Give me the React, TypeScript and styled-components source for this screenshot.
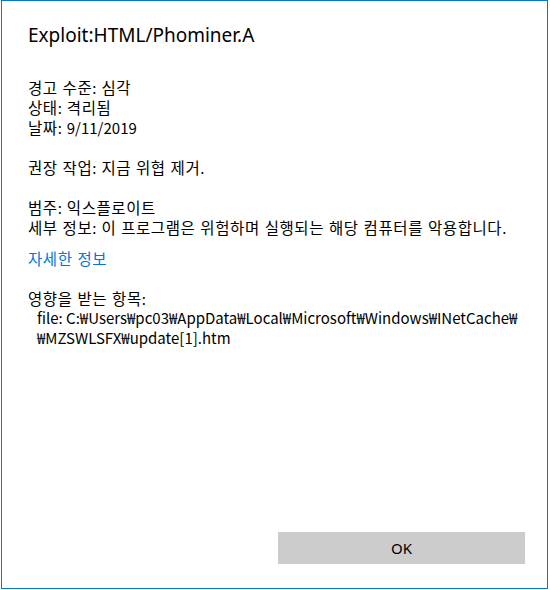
import styled, { createGlobalStyle } from 'styled-components';

const GlobalStyle = createGlobalStyle`
  html, body {
    margin: 0;
    padding: 0;
    background: #ffffff;
  }
  body {
    font-family: "Noto Sans", "Noto Sans CJK KR", sans-serif;
  }
`;

const details = {
  title: 'Exploit:HTML/Phominer.A',
  summary: ['경고 수준: 심각', '상태: 격리됨', '날짜: 9/11/2019'],
  action: '권장 작업: 지금 위협 제거.',
  info: ['범주: 익스플로이트', '세부 정보: 이 프로그램은 위험하며 실행되는 해당 컴퓨터를 악용합니다.'],
  link: '자세한 정보',
  affectedLabel: '영향을 받는 항목:',
  affected: [
    'file: C:₩Users₩pc03₩AppData₩Local₩Microsoft₩Windows₩INetCache₩',
    '₩MZSWLSFX₩update[1].htm',
  ],
};

// hangul in the original font runs a bit wider than Noto's, so wrap those runs
const withHangul = (text: string) =>
  text.split(/([가-힣]+)/).map((part, i) =>
    /[가-힣]/.test(part) ? <Hangul key={i}>{part}</Hangul> : part
  );

const App = () => {
  return (
    <>
      <GlobalStyle />
      <Window>
        <Content>
          <Title>{details.title}</Title>

          <Block>
            {details.summary.map((line, i) => (
              <Line key={i}>{withHangul(line)}</Line>
            ))}
          </Block>

          <Block>
            <Line>{withHangul(details.action)}</Line>
          </Block>

          <Block $gap={10}>
            {details.info.map((line, i) => (
              <Line key={i}>{withHangul(line)}</Line>
            ))}
          </Block>

          <Block $gap={17}>
            <MoreLink href="#">{withHangul(details.link)}</MoreLink>
          </Block>

          <Block>
            <Line>{withHangul(details.affectedLabel)}</Line>
            {details.affected.map((line, i) => (
              <PathLine key={i}>{line}</PathLine>
            ))}
          </Block>
        </Content>

        <Footer>
          <OkButton>OK</OkButton>
        </Footer>
      </Window>
    </>
  );
};

export default App;

// --- Styled Components ---
const Window = styled.div`
  box-sizing: border-box;
  margin-left: 1px;
  width: 547px;
  height: 589px;
  border: 1px solid #0078d7;
  background: #ffffff;
  display: flex;
  flex-direction: column;
`;

const Content = styled.div`
  flex: 1;
  padding: 20px 22px 0 26px;
  color: #000000;
  font-family: "Noto Sans CJK KR", "Noto Sans", sans-serif;
  font-size: 15px;
  line-height: 20px;
`;

const Title = styled.h1`
  margin: 0 0 28px;
  font-family: "Noto Sans", "Noto Sans CJK KR", sans-serif;
  font-size: 19px;
  font-weight: 400;
  line-height: 28px;
`;

const Block = styled.div<{ $gap?: number }>`
  margin-bottom: ${({ $gap }) => $gap ?? 20}px;
`;

const Line = styled.div`
  white-space: nowrap;
  height: 20px;
  word-spacing: 1.5px;
`;

const Hangul = styled.span`
  font-size: 15.5px;
  letter-spacing: 0.6px;
  line-height: 20px;
`;

const PathLine = styled(Line)`
  padding-left: 9px;
  word-spacing: normal;
`;

const MoreLink = styled.a`
  display: inline-block;
  color: #0078d7;
  text-decoration: none;
  font-size: 15px;
  line-height: 24px;
  word-spacing: 1.5px;
`;

const Footer = styled.div`
  display: flex;
  justify-content: flex-end;
  padding: 0 22px 24px 0;
`;

const OkButton = styled.button`
  width: 247px;
  height: 32px;
  border: none;
  background: #cccccc;
  color: #000000;
  font-family: "Noto Sans", sans-serif;
  font-size: 15px;
  padding: 0;
  cursor: pointer;
`;
